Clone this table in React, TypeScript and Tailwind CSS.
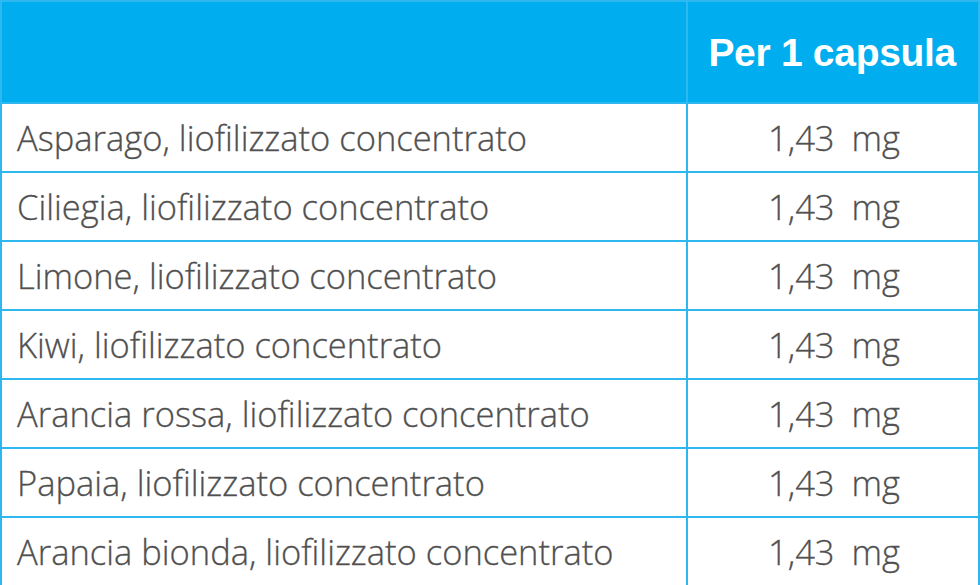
import React from "react";

const rows = [
  "Asparago, liofilizzato concentrato",
  "Ciliegia, liofilizzato concentrato",
  "Limone, liofilizzato concentrato",
  "Kiwi, liofilizzato concentrato",
  "Arancia rossa, liofilizzato concentrato",
  "Papaia, liofilizzato concentrato",
  "Arancia bionda, liofilizzato concentrato",
];

export default function App() {
  return (
    <div className="w-[980px] h-[585px] bg-white overflow-hidden">
      <table
        className="w-[980px] border-collapse"
        style={{ fontFamily: '"Open Sans", sans-serif', fontVariantLigatures: "none" }}
      >
        <thead>
          <tr className="h-[102px] bg-[#00aeef]">
            <th className="w-[686px] border-2 border-[#2fb8f0]"></th>
            <th
              className="text-right pr-[22px] pt-[2px] text-white font-bold text-[39px] tracking-[-0.3px] border-2 border-[#2fb8f0]"
              style={{ fontFamily: '"Liberation Sans", Arial, sans-serif' }}
            >
              Per 1 capsula
            </th>
          </tr>
        </thead>
        <tbody>
          {rows.map((r) => (
            <tr key={r} className="h-[69px]">
              <td className="border-2 border-[#2fb8f0] pl-[15px] text-[34.5px] font-light text-[#505050] [-webkit-text-stroke:0.3px_#505050]">{r}</td>
              <td className="border-2 border-[#2fb8f0] pl-[2px] text-center text-[34.5px] font-light text-[#505050] [-webkit-text-stroke:0.3px_#505050]">
                <span>1,43</span>
                <span className="ml-[17px]">mg</span>
              </td>
            </tr>
          ))}
        </tbody>
      </table>
    </div>
  );
}
